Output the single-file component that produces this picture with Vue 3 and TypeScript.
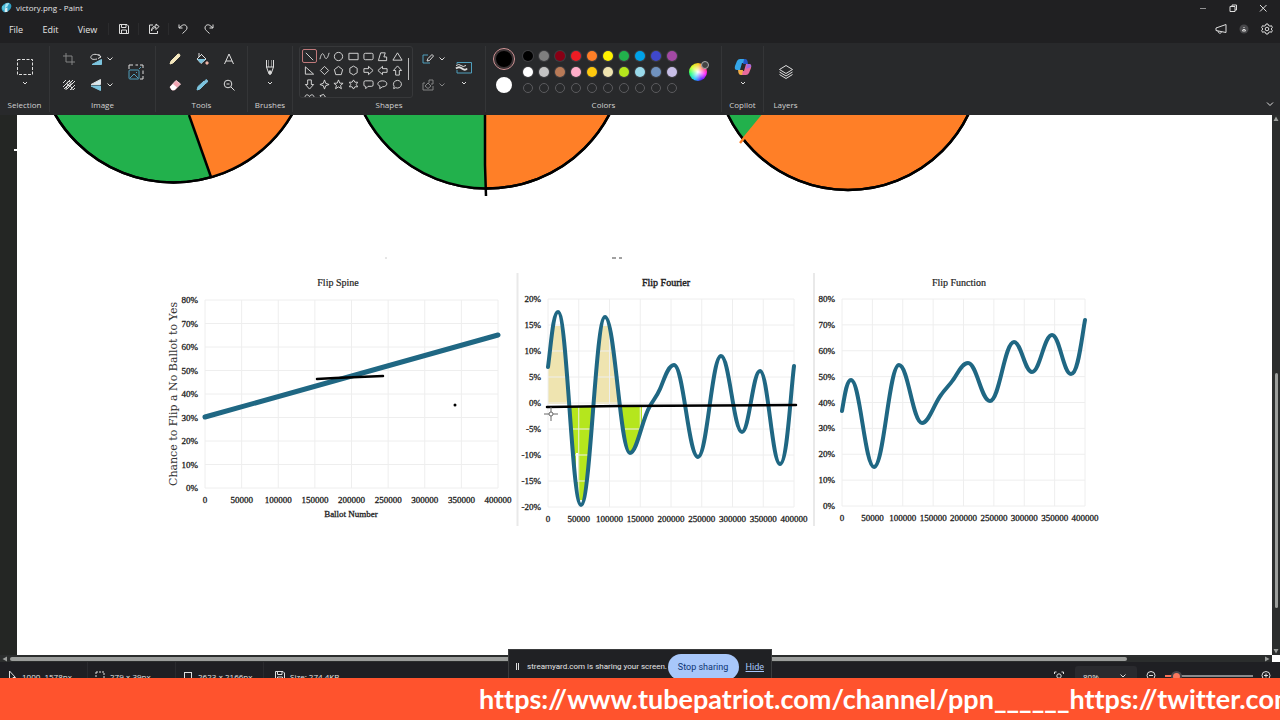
<script setup lang="ts">
import { ref } from 'vue'

type Point = [number, number]

interface Chart {
  title: string
  titleX: number
  bold: boolean
  left: number
  right: number
  top: number
  bottom: number
  yLabels: string[]
}

const zoomLevel = ref('80%')
const zoomValue = ref(8)

const palette: string[] = [
  '#000000', '#7f7f7f', '#880015', '#ed1c24', '#ff7f27', '#fff200', '#22b14c', '#00a2e8', '#3f48cc', '#a349a4',
  '#ffffff', '#c3c3c3', '#b97a57', '#ffaec9', '#ffc90e', '#efe4b0', '#b5e61d', '#99d9ea', '#7092be', '#c8bfe7',
]
const emptySlots = 10

const shapes: { name: string; d: string }[] = [
  { name: 'Line', d: 'M2 2L10 10' },
  { name: 'Curve', d: 'M1 9C3 0 5 3 6 6S9 10 11 2' },
  { name: 'Oval', d: 'M6 1.5a4.5 4.5 0 1 0 0 9a4.5 4.5 0 1 0 0-9Z' },
  { name: 'Rectangle', d: 'M1 2.5H11V9.500H1Z' },
  { name: 'Rounded rectangle', d: 'M2.500 2.500H9.500Q11 2.500 11 4V8Q11 9.500 9.500 9.500H2.500Q1 9.500 1 8V4Q1 2.500 2.500 2.500Z' },
  { name: 'Polygon', d: 'M4 2H9L7.500 6.500H10.500V10.500H1.500Z' },
  { name: 'Triangle', d: 'M6 2L11 10H1Z' },
  { name: 'Right triangle', d: 'M1.500 2V10H10.500Z' },
  { name: 'Diamond', d: 'M6 1.500L10.500 6L6 10.500L1.500 6Z' },
  { name: 'Pentagon', d: 'M6 1.500L10.500 5L9 10.500H3L1.500 5Z' },
  { name: 'Hexagon', d: 'M6 1.200L10 3.500V8.500L6 10.800L2 8.500V3.500Z' },
  { name: 'Right arrow', d: 'M1 4H6V1.500L11 6L6 10.500V8H1Z' },
  { name: 'Left arrow', d: 'M11 4H6V1.500L1 6L6 10.500V8H11Z' },
  { name: 'Up arrow', d: 'M4 11V6H1.500L6 1L10.500 6H8V11Z' },
  { name: 'Down arrow', d: 'M4 1V6H1.500L6 11L10.500 6H8V1Z' },
  { name: 'Four-point star', d: 'M6 1L7.300 4.700L11 6L7.300 7.300L6 11L4.700 7.300L1 6L4.700 4.700Z' },
  { name: 'Five-point star', d: 'M6 1L7.400 4.500L11 4.700L8.200 7L9.200 10.600L6 8.600L2.800 10.600L3.800 7L1 4.700L4.600 4.500Z' },
  { name: 'Six-point star', d: 'M6 1L7.500 3.500H10.500L9 6L10.500 8.500H7.500L6 11L4.500 8.500H1.500L3 6L1.500 3.500H4.500Z' },
  { name: 'Rounded callout', d: 'M2.500 2H9.500Q11 2 11 3.500V6.500Q11 8 9.500 8H5.500L3 10.500V8H2.500Q1 8 1 6.500V3.500Q1 2 2.500 2Z' },
  { name: 'Oval callout', d: 'M6 2C12.300 2 12.300 8.500 6 8.500L3 10.500L3.300 8C-1 6 1 2 6 2Z' },
  { name: 'Cloud callout', d: 'M6 1.500a4.400 4.200 0 1 1-2 8L1.800 10.500L2.300 8A4.400 4.200 0 0 1 6 1.500Z' },
  { name: 'Heart', d: 'M6 10.500L1.500 5.500C0 2 4.500 0.500 6 4C7.500 0.500 12 2 10.500 5.500Z' },
  { name: 'Lightning', d: 'M1 3L5 1.500L7 4.500L8.500 5L11 10.500L6 8Z' },
]

const xLabels = ['0', '50000', '100000', '150000', '200000', '250000', '300000', '350000', '400000']
const percent = ['80%', '70%', '60%', '50%', '40%', '30%', '20%', '10%', '0%']

const charts: Chart[] = [
  {
    title: 'Flip Spine', titleX: 338, bold: false, left: 205, right: 498, top: 300, bottom: 488,
    yLabels: percent,
  },
  {
    title: 'Flip Fourier', titleX: 666, bold: true, left: 548, right: 794, top: 299, bottom: 507,
    yLabels: ['20%', '15%', '10%', '5%', '0%', '-5%', '-10%', '-15%', '-20%'],
  },
  {
    title: 'Flip Function', titleX: 959, bold: false, left: 842, right: 1085, top: 299, bottom: 506,
    yLabels: percent,
  },
]

// Joins successive crests and troughs with level tangents at each of them.
function wave(points: Point[]): string {
  let d = ''
  for (let i = 1; i < points.length; i++) {
    const [x0, y0] = points[i - 1]
    const [x1, y1] = points[i]
    const k = (x1 - x0) * 0.4
    d += `C${x0 + k} ${y0} ${x1 - k} ${y1} ${x1} ${y1}`
  }
  return d
}

const fourierPath =
  'M548 367C551 345 553 312 558 312' +
  wave([[558, 312], [581, 505], [605, 317], [630, 453]]) +
  'C637 453 642 419 650 406C654 399 657 396 660 389C664 380 668 365 674 365' +
  wave([[674, 365], [698, 457], [721, 356], [742, 432], [760, 371], [780, 464]]) +
  'C787 464 790 400 794 366'

const functionPath =
  'M842 411C845 393 847 380 851 380' +
  wave([[851, 380], [874, 467], [899, 365], [922, 423]]) +
  'C929 423 934 404 941 395C945 389 949 386 953 380C958 373 962 363 968 363' +
  wave([[968, 363], [990, 401], [1014, 342], [1032, 372], [1052, 335], [1071, 374]]) +
  'C1078 374 1081 343 1085 320'

function gridX(c: Chart, i: number): number {
  return c.left + ((c.right - c.left) * i) / 8
}
function gridY(c: Chart, i: number): number {
  return c.top + ((c.bottom - c.top) * i) / 8
}
</script>

<template>
  <div class="window">
    <header class="titlebar">
      <svg class="logo" viewBox="0 0 12 12">
        <path d="M6 1C10 0 12 3 11 6S6 12 3 11C1 10 0 7 1 5S3 2 6 1Z" fill="#2f9fc4" />
        <path d="M5 1.500L9 1L7 5L4 7Z" fill="#a6e3f2" />
        <path d="M4 7L7 6V11L4 11Z" fill="#d9eef3" />
        <path d="M1 5L4 3L4 8L2 9Z" fill="#57c7e0" />
      </svg>
      <h1>victory.png - Paint</h1>
      <div class="window-buttons">
        <button aria-label="Minimize" class="faint"><svg viewBox="0 0 10 10"><path d="M2 5.500H8" /></svg></button>
        <button aria-label="Restore"><svg viewBox="0 0 10 10"><path d="M2 3.500H7V8.500H2ZM4 3.500V2H8.500V7H7" /></svg></button>
        <button aria-label="Close"><svg viewBox="0 0 10 10"><path d="M2 2L8.500 8.500M8.500 2L2 8.500" /></svg></button>
      </div>
    </header>

    <nav class="menubar">
      <button class="menu">File</button>
      <button class="menu">Edit</button>
      <button class="menu">View</button>
      <div class="quick first">
        <button aria-label="Save"><svg viewBox="0 0 12 12"><path d="M1.500 1.500H9L10.500 3V10.500H1.500ZM3.500 1.500V4.500H8V1.500M3.500 10.500V7H8.500V10.500" /></svg></button>
      </div>
      <div class="quick">
        <button aria-label="Share"><svg viewBox="0 0 12 12"><path d="M5 2H1.500V10.500H9.500V8M3.500 8C4 5.500 6 4.500 8 4.500V6.500L11 3.500L8 1V3C5 3 3.500 5 3.500 8Z" /></svg></button>
      </div>
      <div class="history">
        <button aria-label="Undo"><svg viewBox="0 0 12 12"><path d="M2 1.500V5H5.500M2 5L5 2.500C7 1 10 2 10 5C10 7 8 8 5.500 10.500" /></svg></button>
        <button aria-label="Redo"><svg viewBox="0 0 12 12"><path d="M10 1.500V5H6.500M10 5L7 2.500C5 1 2 2 2 5C2 7 4 8 6.500 10.500" /></svg></button>
      </div>
      <div class="account">
        <button aria-label="Feedback"><svg viewBox="0 0 12 12"><path d="M1 5L11 1.500V9.500L1 7.500ZM3 8C3 10.500 6 11 6.500 9" /></svg></button>
        <button aria-label="Account"><svg viewBox="0 0 12 12"><circle cx="6" cy="6" r="4.500" class="avatar" /><path d="M6 4V5M4.500 8L5 6.500H7L7.500 8Z" /></svg></button>
        <button aria-label="Settings"><svg viewBox="0 0 12 12"><path d="M5 1H7L7.500 2.500L9 3.200L10.500 2.700L11.300 4.500L10.200 6L11.300 7.500L10.500 9.300L9 8.800L7.500 9.500L7 11H5L4.500 9.500L3 8.800L1.500 9.300L0.700 7.500L1.800 6L0.700 4.500L1.500 2.700L3 3.200L4.500 2.500Z" /><circle cx="6" cy="6" r="1.800" /></svg></button>
      </div>
    </nav>

    <section class="ribbon">
      <div class="group selection">
        <div class="tools stack">
          <button class="big" aria-label="Select"><svg viewBox="0 0 18 18"><rect x="1.500" y="1.500" width="15" height="15" stroke-dasharray="3 1.500" /></svg></button>
          <button class="chev" aria-label="Selection options"><svg viewBox="0 0 8 8"><path d="M2 3L4 5L6 3" /></svg></button>
        </div>
        <h2>Selection</h2>
      </div>

      <div class="group image">
        <div class="tools image-grid">
          <button class="icon dim" aria-label="Crop"><svg viewBox="0 0 14 14"><path d="M4 1V10H13M1 4H10V13" /></svg></button>
          <div class="pair">
            <button class="icon" aria-label="Rotate"><svg viewBox="0 0 14 14"><path d="M9.500 2L12 5L9 6.500M12 5C8 1 3 2 2 4.500S4 8 8 7" /><path d="M3 12.500L12.500 7.500V12.500Z" class="blue" /></svg></button>
            <button class="chev" aria-label="Rotate options"><svg viewBox="0 0 8 8"><path d="M1.500 2.500L4 5L6.500 2.500" /></svg></button>
          </div>
          <button class="resize" aria-label="Resize"><svg viewBox="0 0 18 18"><path d="M2 6V2H6M8.500 2H11M13 2H16V5M16 7.500V11M16 13V16H13" /><rect x="2" y="7" width="10" height="9" rx="1" class="blue-line" /><path d="M3 15L7 11L11 15M9 9.500H10M12 6L14 4" class="blue-line" /></svg></button>
          <button class="icon" aria-label="Remove background"><svg viewBox="0 0 14 14"><path d="M1 5L4 2M1 9L8 2M2 11L11 2M5 11L13 3M8 12L13 7M4 12C4 6 10 6 10 12M11 12L13 10" /><circle cx="7" cy="5.500" r="2" /></svg></button>
          <div class="pair">
            <button class="icon" aria-label="Flip"><svg viewBox="0 0 14 14"><path d="M11.500 1.500V6.500L2 6.500Z" fill="#d6eaf2" /><path d="M2 8H11.500V12.500Z" class="blue" /></svg></button>
            <button class="chev" aria-label="Flip options"><svg viewBox="0 0 8 8"><path d="M1.500 2.500L4 5L6.500 2.500" /></svg></button>
          </div>
        </div>
        <h2>Image</h2>
      </div>

      <div class="group toolset">
        <div class="tools tool-grid">
          <button class="icon" aria-label="Pencil"><svg viewBox="0 0 14 14"><path d="M2 12L3 9L10 2Q12 1.500 12 4L5 11Z" fill="#f3e6bd" stroke="#f3e6bd" /></svg></button>
          <button class="icon" aria-label="Fill"><svg viewBox="0 0 14 14"><path d="M6 2L11 7L6 11.500L2 7L6.500 2.500M4 1V5" /><path d="M3 7.500H10L6 11Z" class="blue" /><circle cx="12" cy="11" r="1.200" fill="#efb6a8" stroke="#efb6a8" /></svg></button>
          <button class="icon" aria-label="Text"><svg viewBox="0 0 14 14"><path d="M2.500 12L7 2L11.500 12M4 9H10" /></svg></button>
          <button class="icon" aria-label="Eraser"><svg viewBox="0 0 14 14"><path d="M2 9L8 2.500L12.500 6L6.500 12H4Z" fill="#f2a6b4" stroke="#f5cdd3" /><path d="M2 9L5 6L9 9.500L6.500 12H4Z" fill="#fff" stroke="none" /></svg></button>
          <button class="icon" aria-label="Color picker"><svg viewBox="0 0 14 14"><path d="M2 12L3 8.500L8 4L10 6L5 11Z" class="blue" /><path d="M8 3L11 6M9 4L11 1.500Q13 2 12.500 4L10.500 5.500" stroke="#7fc1dc" fill="#7fc1dc" /></svg></button>
          <button class="icon" aria-label="Magnifier"><svg viewBox="0 0 14 14"><circle cx="6" cy="6" r="3.800" /><path d="M9 9L12.500 12.500M4.500 6H7.500" /></svg></button>
        </div>
        <h2>Tools</h2>
      </div>

      <div class="group brushes">
        <div class="tools stack">
          <button class="big" aria-label="Brush"><svg viewBox="0 0 18 18"><path d="M5.500 2V9L8 16H10L12.500 9V2M5.500 9H12.500" /><path d="M7.500 2V9M10.500 2V9" opacity="0.500" /><path d="M8 13H10L9 16.500Z" fill="#ddd" /></svg></button>
          <button class="chev" aria-label="Brush options"><svg viewBox="0 0 8 8"><path d="M2 3L4 5L6 3" /></svg></button>
        </div>
        <h2>Brushes</h2>
      </div>

      <div class="group shapes">
        <div class="tools shape-tools">
          <div class="gallery">
            <div class="shape-grid">
              <button v-for="(s, i) in shapes" :key="s.name" :class="{ selected: i === 0 }" :aria-label="s.name">
                <svg viewBox="0 0 12 12"><path :d="s.d" /></svg>
              </button>
            </div>
            <span class="gallery-thumb"></span>
          </div>
          <div class="shape-options">
            <div class="pair">
              <button class="icon" aria-label="Outline"><svg viewBox="0 0 14 14"><path d="M7 3H2V11H9" class="blue-line" /><path d="M6 9L7 6.500L11 2.500L12.500 4L8.500 8.500Z" /></svg></button>
              <button class="chev" aria-label="Outline options"><svg viewBox="0 0 8 8"><path d="M1.500 2.500L4 5L6.500 2.500" /></svg></button>
            </div>
            <div class="pair dim">
              <button class="icon" aria-label="Shape fill"><svg viewBox="0 0 14 14"><path d="M4 5H2V12H12V8M4 8L7 5L10 8L7 10.500ZM8 5V2H12V6H10" /></svg></button>
              <button class="chev" aria-label="Fill options"><svg viewBox="0 0 8 8"><path d="M1.500 2.500L4 5L6.500 2.500" /></svg></button>
            </div>
          </div>
          <div class="stack size">
            <button class="big" aria-label="Size"><svg viewBox="0 0 18 18"><path d="M2 6V4.500H16.500V15H2V12" class="blue-line" /><path d="M1 7.500Q4 5.500 6 7.500T11 7.500" /><path d="M1 10.500Q4 8 7 10.500T12 10.500" stroke-width="2" /></svg></button>
            <button class="chev" aria-label="Size options"><svg viewBox="0 0 8 8"><path d="M2 3L4 5L6 3" /></svg></button>
          </div>
        </div>
        <h2>Shapes</h2>
      </div>

      <div class="group colors">
        <div class="tools color-tools">
          <div class="active-colors">
            <button class="primary" aria-label="Color 1"></button>
            <button class="secondary" aria-label="Color 2"></button>
          </div>
          <div class="swatches">
            <button v-for="c in palette" :key="c" :style="{ background: c }" :aria-label="c"></button>
            <button v-for="n in emptySlots" :key="n" class="empty" :aria-label="'Empty slot ' + n"></button>
          </div>
          <button class="wheel" aria-label="Edit colors"><span></span></button>
        </div>
        <h2>Colors</h2>
      </div>

      <div class="group copilot">
        <div class="tools stack">
          <button class="big" aria-label="Copilot">
            <svg viewBox="0 0 18 18">
              <path d="M6 1H11L13 5H8L6 12H3Q0 12 1 8L3 3Q4 1 6 1Z" fill="#35a6e8" stroke="none" />
              <path d="M11 1Q13 1 13.500 3L14 6H9L10 1Z" fill="#2457c9" stroke="none" />
              <path d="M12 17H7L5 13H10L12 6H15Q18 6 17 10L15 15Q14 17 12 17Z" fill="#e86a9c" stroke="none" />
              <path d="M7 17Q5 17 4.500 15L4 12H9L8 17Z" fill="#f2ad45" stroke="none" />
              <path d="M14 6Q18 6 17 9L12 11L13 6Z" fill="#a06be0" stroke="none" />
            </svg>
          </button>
          <button class="chev" aria-label="Copilot options"><svg viewBox="0 0 8 8"><path d="M2 3L4 5L6 3" /></svg></button>
        </div>
        <h2>Copilot</h2>
      </div>

      <div class="group layers">
        <div class="tools single">
          <button class="layer-button" aria-label="Layers"><svg viewBox="0 0 16 16"><path d="M8 1.500L14.500 5.500L8 9.500L1.500 5.500ZM1.500 8L8 12L14.500 8M1.500 10.500L8 14.500L14.500 10.500" /></svg></button>
        </div>
        <h2>Layers</h2>
      </div>
      <button class="chev collapse" aria-label="Collapse ribbon"><svg viewBox="0 0 8 8"><path d="M1 2.500L4 5.500L7 2.500" /></svg></button>
    </section>

    <main class="workspace">
      <div class="gutter"><span class="handle"></span></div>
      <svg class="canvas" viewBox="17 115 1255 540" preserveAspectRatio="xMinYMin meet">
        <defs>
          <clipPath id="above"><rect x="548" y="326" width="70" height="78" /></clipPath>
          <clipPath id="below"><rect x="566" y="406" width="76" height="94" /></clipPath>
        </defs>

        <g class="pies">
          <circle cx="173.500" cy="45.500" r="137" fill="#22b14c" />
          <path d="M189 115L211 177A137 137 0 0 0 292 115Z" fill="#ff7f27" stroke="none" />
          <circle cx="173.500" cy="45.500" r="137" />
          <path d="M189 115L211 177" />
          <circle cx="487" cy="50.500" r="138" fill="#ff7f27" />
          <path d="M365 115A138 138 0 0 0 485 188V115Z" fill="#22b14c" stroke="none" />
          <circle cx="487" cy="50.500" r="138" />
          <path d="M485 115L485 165L486 196" />
          <circle cx="848" cy="56.500" r="133.500" fill="#ff7f27" />
          <path d="M728 115Q735 129 743 138L763 115Z" fill="#22b14c" stroke="none" />
          <circle cx="848" cy="56.500" r="133.500" />
          <path d="M763 115L740 143" class="orange-stroke" />
        </g>
        <path d="M612 258H616M619 258H622" stroke="#444" />
        <path d="M385 258H387" stroke="#ccc" />

        <path :d="fourierPath + 'V405H548Z'" fill="#efe4b0" clip-path="url(#above)" />
        <path :d="fourierPath + 'V405H548Z'" fill="#b5e61d" clip-path="url(#below)" />
        <path d="M577 453V482" stroke="#fff" stroke-width="2" />
        <path d="M517.500 273V526M814 273V526" stroke="#e9e9e9" stroke-width="2" />

        <g v-for="c in charts" :key="c.title" class="chart">
          <g class="grid">
            <path v-for="i in 9" :key="'v' + i" :d="`M${gridX(c, i - 1)} ${c.top}V${c.bottom}`" />
            <path v-for="i in 9" :key="'h' + i" :d="`M${c.left} ${gridY(c, i - 1)}H${c.right}`" />
          </g>
          <text :x="c.titleX" y="286" class="chart-title" :class="{ strong: c.bold }">{{ c.title }}</text>
          <text v-for="(t, i) in c.yLabels" :key="t" :x="c.left - 7" :y="gridY(c, i) + 3" class="y-label">{{ t }}</text>
          <text v-for="(t, i) in xLabels" :key="t" :x="gridX(c, i)" :y="c.bottom + 15" class="x-label">{{ t }}</text>
        </g>
        <text x="351" y="517" class="x-label">Ballot Number</text>
        <text transform="translate(177 394) rotate(-90)" class="axis-title">Chance to Flip a No Ballot to Yes</text>

        <g class="curves">
          <path d="M205 417L498 335" class="spine" />
          <path :d="fourierPath" />
          <path :d="functionPath" />
        </g>
        <g class="ink">
          <path d="M317 379L335 378L383 376" />
          <path d="M547 407L620 406L796 405" />
          <circle cx="455" cy="405" r="1.500" />
        </g>
        <g class="crosshair">
          <circle cx="551" cy="414" r="2" />
          <path d="M544 414H549M553 414H558M551 407V412M551 416V421" />
        </g>
      </svg>
      <div class="vscroll">
        <svg viewBox="0 0 8 8"><path d="M4 1.500L6.500 6H1.500Z" /></svg>
        <span class="vthumb"></span>
        <svg viewBox="0 0 8 8"><path d="M4 6.500L6.500 2H1.500Z" /></svg>
      </div>
    </main>

    <div class="hscroll">
      <svg viewBox="0 0 8 8"><path d="M1.500 4L6 1.500V6.500Z" /></svg>
      <div class="track"><span class="hthumb"></span></div>
      <svg viewBox="0 0 8 8"><path d="M6.500 4L2 1.500V6.500Z" /></svg>
      <span class="corner"></span>
    </div>

    <footer class="status">
      <div class="cell"><svg viewBox="0 0 12 12"><path d="M3.500 1V10L5.500 8L7 11L8.500 10L7 7.500H9.500Z" /></svg>1000, 1578px</div>
      <div class="cell"><svg viewBox="0 0 12 12"><rect x="2" y="2" width="8" height="8" stroke-dasharray="2 1" /></svg>279 × 39px</div>
      <div class="cell"><svg viewBox="0 0 12 12"><rect x="2.500" y="2.500" width="7" height="8" /></svg>2623 × 2166px</div>
      <div class="cell last"><svg viewBox="0 0 12 12"><path d="M1.500 1.500H9L10.500 3V10.500H1.500ZM3.500 1.500V4.500H8V1.500M3.500 10.500V7H8.500V10.500" /></svg>Size: 274.4KB</div>
      <div class="zoom">
        <button aria-label="Fit to window"><svg viewBox="0 0 12 12"><path d="M1.500 4V2H3.500M8.500 2H10.500V4M10.500 8V10H8.500M3.500 10H1.500V8" /><circle cx="6" cy="6" r="2.200" /></svg></button>
        <span class="select-wrap">
          <select v-model="zoomLevel" aria-label="Zoom level"><option>80%</option><option>100%</option></select>
          <svg viewBox="0 0 8 8"><path d="M1.500 2.500L4 5L6.500 2.500" /></svg>
        </span>
        <button aria-label="Zoom out"><svg viewBox="0 0 12 12"><circle cx="6" cy="5.500" r="4" /><path d="M4 5.500H8M9 8.500L11 11" /></svg></button>
        <input v-model="zoomValue" type="range" min="0" max="100" aria-label="Zoom" />
        <button aria-label="Zoom in"><svg viewBox="0 0 12 12"><circle cx="6" cy="5.500" r="4" /><path d="M4 5.500H8M6 3.500V7.500M9 8.500L11 11" /></svg></button>
      </div>
    </footer>

    <aside class="sharing">
      <span class="pause"></span>
      <p>streamyard.com is sharing your screen.</p>
      <button>Stop sharing</button>
      <a href="#">Hide</a>
    </aside>

    <div class="ticker"><p>https://www.tubepatriot.com/channel/ppn______https://twitter.com</p></div>
  </div>
</template>

<style>
body {
  margin: 0;
  background: #202022;
}
</style>

<style scoped>
.window {
  position: relative;
  display: flex;
  flex-direction: column;
  height: 100vh;
  overflow: hidden;
  background: #202022;
  color: #e4e4e4;
  font-family: "Open Sans", "Noto Sans", sans-serif;
  font-size: 8px;
}
button {
  display: flex;
  align-items: center;
  justify-content: center;
  padding: 0;
  border: 0;
  background: none;
  color: inherit;
  font: inherit;
}
svg {
  display: block;
  flex: none;
}
button svg, .cell svg, .select-wrap svg {
  fill: none;
  stroke: #dedede;
}
h1, h2, p {
  margin: 0;
  font-size: inherit;
  font-weight: 400;
  white-space: nowrap;
}
.titlebar {
  display: flex;
  align-items: center;
  height: 15px;
  flex: none;
}
.logo {
  width: 11px;
  height: 11px;
  margin: 0 4px 0 1px;
}
.window-buttons {
  display: flex;
  gap: 20px;
  margin-left: auto;
  padding-right: 12px;
}
.window-buttons svg {
  width: 10px;
  height: 10px;
}
.faint {
  opacity: 0.6;
}
.menubar {
  display: flex;
  align-items: center;
  height: 28px;
  flex: none;
}
.menu {
  width: 37px;
  font-size: 9px;
}
.menu:first-child {
  width: 32px;
}
.menubar svg {
  width: 12px;
  height: 12px;
}
.quick {
  width: 29px;
  display: flex;
  justify-content: center;
  border-left: 1px solid #2b2b2d;
}
.quick.first {
  margin-left: 2px;
}
.history {
  display: flex;
  gap: 14px;
  padding-left: 8px;
  border-left: 1px solid #2b2b2d;
}
.account {
  display: flex;
  gap: 11px;
  margin-left: auto;
  padding-right: 7px;
}
.avatar {
  fill: #48484b;
  stroke: none;
}
.ribbon {
  display: flex;
  height: 69px;
  flex: none;
  padding-top: 3px;
  background: #28292b;
}
.group {
  display: flex;
  flex-direction: column;
  box-sizing: border-box;
  flex: none;
  height: 66px;
  border-right: 1px solid #343537;
}
.group h2 {
  line-height: 13px;
  text-align: center;
  color: #d2d2d2;
}
.tools {
  height: 52px;
}
.selection { width: 50px; }
.image { width: 106px; }
.toolset { width: 92px; }
.brushes { width: 45px; }
.shapes { width: 193px; }
.colors { width: 236px; }
.copilot { width: 42px; }
.layers { width: 43px; border-right: 0; }
.stack {
  display: flex;
  flex-direction: column;
  align-items: center;
  padding-top: 12px;
  box-sizing: border-box;
}
.big svg {
  width: 18px;
  height: 18px;
}
.stack .chev {
  margin-top: 3px;
}
.chev svg {
  width: 8px;
  height: 8px;
}
.icon svg {
  width: 14px;
  height: 14px;
}
.dim {
  opacity: 0.5;
}
.pair {
  display: flex;
  align-items: center;
  justify-content: center;
  gap: 3px;
}
.image-grid {
  display: grid;
  grid-template-columns: 26px 38px 32px;
  grid-template-rows: 26px 26px;
  padding-left: 6px;
}
.resize {
  grid-column: 3;
  grid-row: 1 / 3;
}
.resize svg {
  width: 18px;
  height: 18px;
}
.blue {
  fill: #7cc4de;
  stroke: #7cc4de;
}
.blue-line {
  stroke: #4f9fbd;
}
.tool-grid {
  display: grid;
  grid-template-columns: repeat(3, 27px);
  grid-template-rows: 26px 26px;
  justify-content: center;
}
.shape-tools {
  display: flex;
  padding-left: 6px;
}
.gallery {
  display: flex;
  box-sizing: border-box;
  width: 114px;
  height: 52px;
  padding: 2px;
  overflow: hidden;
  border: 1px solid #37383a;
  border-radius: 3px;
}
.shape-grid {
  display: grid;
  grid-template-columns: repeat(7, 1fr);
  grid-auto-rows: 14px;
  flex: none;
  width: 103px;
}
.shape-grid svg {
  width: 11px;
  height: 11px;
}
.shape-grid .selected {
  border: 1px solid #c0797b;
  border-radius: 2px;
}
.gallery-thumb {
  flex: none;
  width: 1px;
  height: 22px;
  margin: 9px 0 0 3px;
  background: #bbb;
}
.shape-options {
  display: grid;
  grid-template-rows: 26px 26px;
  width: 40px;
}
.size {
  width: 22px;
}
.color-tools {
  display: flex;
  align-items: center;
}
.active-colors {
  display: flex;
  flex-direction: column;
  align-items: center;
  gap: 7px;
  width: 36px;
  padding-bottom: 3px;
}
.primary {
  width: 22px;
  height: 22px;
  box-sizing: border-box;
  border: 1px solid #d79a9c;
  border-radius: 50%;
  background: #000;
  box-shadow: inset 0 0 0 2px #3a3335;
}
.secondary {
  width: 16px;
  height: 16px;
  border-radius: 50%;
  background: #fff;
}
.swatches {
  display: grid;
  grid-template-columns: repeat(10, 10px);
  gap: 6px;
  margin-left: 1px;
}
.swatches button {
  height: 10px;
  border-radius: 50%;
  box-shadow: 0 0 0 1px #3d3d40;
}
.swatches .empty {
  box-sizing: border-box;
  border: 1px solid #5b5b5e;
  box-shadow: none;
}
.wheel {
  position: relative;
  width: 18px;
  height: 18px;
  margin-left: 12px;
  border-radius: 50%;
  background: radial-gradient(circle, #fff, transparent 75%), conic-gradient(#f5c400, #f33, #f0f, #40f, #0bf, #0f6, #cf0, #f5c400);
}
.wheel span {
  position: absolute;
  top: -2px;
  right: -2px;
  width: 6px;
  height: 6px;
  border: 1px solid #aaa;
  border-radius: 50%;
  background: #444;
}
.single {
  display: flex;
  align-items: center;
  justify-content: center;
}
.layer-button svg {
  width: 16px;
  height: 16px;
}
.collapse {
  align-self: flex-end;
  margin: 0 6px 7px auto;
}
.workspace {
  display: flex;
  flex: 1;
  min-height: 0;
  background: #242624;
}
.gutter {
  width: 17px;
  flex: none;
  display: flex;
  justify-content: flex-end;
  padding-top: 34px;
  box-sizing: border-box;
}
.handle {
  width: 3px;
  height: 2px;
  background: #fff;
}
.canvas {
  flex: 1;
  min-width: 0;
  height: 100%;
  background: #fff;
}
.pies {
  fill: none;
  stroke: #000;
  stroke-width: 2.500;
}
.pies .orange-stroke {
  stroke: #ff7f27;
}
.grid {
  stroke: #eeeeee;
  stroke-width: 1;
}
.chart-title, .y-label, .x-label {
  font-family: "Liberation Serif", serif;
  font-size: 9px;
  fill: #222;
  stroke: #222;
  stroke-width: 0.3;
}
.chart-title {
  font-size: 10px;
  text-anchor: middle;
  stroke-width: 0.2;
}
.chart-title.strong {
  stroke-width: 0.4;
}
.x-label {
  text-anchor: middle;
}
.y-label {
  text-anchor: end;
}
.axis-title {
  font-family: "DejaVu Serif", serif;
  font-size: 11px;
  fill: #333;
  text-anchor: middle;
}
.curves {
  fill: none;
  stroke: #1f6783;
  stroke-width: 4;
  stroke-linecap: round;
  stroke-linejoin: round;
}
.spine {
  stroke-width: 5;
}
.ink {
  fill: #000;
  stroke: #000;
  stroke-width: 2.500;
  stroke-linecap: round;
}
.ink path {
  fill: none;
}
.ink circle {
  stroke: none;
}
.crosshair {
  fill: #fff;
  stroke: #666;
}
.vscroll {
  display: flex;
  flex-direction: column;
  align-items: center;
  width: 8px;
  flex: none;
  background: #2b2d2d;
}
.vscroll svg, .hscroll svg {
  width: 8px;
  height: 8px;
  fill: #9c9e9c;
}
.vscroll svg:last-child {
  margin-top: auto;
}
.vthumb {
  width: 3px;
  height: 43.500%;
  margin-top: 250px;
  border-radius: 2px;
  background: #9c9e9c;
}
.hscroll {
  display: flex;
  align-items: center;
  height: 7px;
  flex: none;
  background: #2b2d2d;
}
.hscroll svg {
  margin: 0 1px;
}
.track {
  flex: 1;
}
.hthumb {
  display: block;
  width: 89.200%;
  height: 4px;
  border-radius: 2px;
  background: #9c9e9c;
}
.corner {
  width: 8px;
  height: 7px;
  background: #fff;
}
.status {
  display: flex;
  height: 58px;
  flex: none;
  background: #1f1f23;
}
.cell {
  display: flex;
  align-items: center;
  gap: 4px;
  width: 88px;
  height: 28px;
  box-sizing: border-box;
  padding-left: 6px;
  border-right: 1px solid #2a2a2e;
  white-space: nowrap;
}
.cell svg, .zoom svg {
  width: 12px;
  height: 12px;
}
.cell.last {
  width: 120px;
  padding-left: 10px;
  border-right: 0;
}
.zoom {
  display: flex;
  align-items: center;
  height: 28px;
  margin-left: auto;
  padding-right: 8px;
}
.select-wrap {
  display: flex;
  align-items: center;
  width: 62px;
  height: 20px;
  margin: 0 8px 0 10px;
  background: #2a2a2e;
  border-radius: 3px;
}
.select-wrap select {
  width: 44px;
  padding: 0 0 0 8px;
  border: 0;
  background: none;
  color: #e4e4e4;
  font: inherit;
  appearance: none;
}
.zoom .select-wrap svg {
  width: 8px;
  height: 8px;
}
input[type="range"] {
  width: 88px;
  height: 12px;
  margin: 0 7px 0 8px;
  appearance: none;
  background: linear-gradient(to right, #f5735a 12%, #8a8a8c 12%) center / 100% 2px no-repeat;
}
input[type="range"]::-webkit-slider-thumb {
  appearance: none;
  width: 11px;
  height: 11px;
  border: 2px solid #48454a;
  border-radius: 50%;
  background: #f9795f;
}
.sharing {
  position: absolute;
  left: 50%;
  bottom: 36px;
  transform: translateX(-50%);
  display: flex;
  align-items: center;
  box-sizing: border-box;
  width: 264px;
  height: 35px;
  padding-left: 7px;
  border: 1px solid #3a3b3d;
  background: #202124;
  font-family: Roboto, sans-serif;
  font-size: 8px;
}
.pause {
  flex: none;
  width: 1px;
  height: 7px;
  margin-right: 8px;
  border: solid #ddd;
  border-width: 0 1px;
}
.sharing p {
  flex: 1;
}
.sharing button {
  flex: none;
  width: 71px;
  height: 26px;
  border-radius: 13px;
  background: #a8c7fa;
  color: #0c3472;
  font-size: 9px;
}
.sharing a {
  margin: 0 7px;
  color: #a8c7fa;
  font-size: 9px;
}
.ticker {
  position: absolute;
  left: 0;
  right: 0;
  bottom: 0;
  height: 42px;
  overflow: hidden;
  background: #ff532d;
  color: #fff;
  font-family: Lato, sans-serif;
  font-size: 27px;
  font-variant-ligatures: none;
  line-height: 42px;
}
.ticker p {
  font-weight: 700;
  padding-left: 479px;
}
</style>
